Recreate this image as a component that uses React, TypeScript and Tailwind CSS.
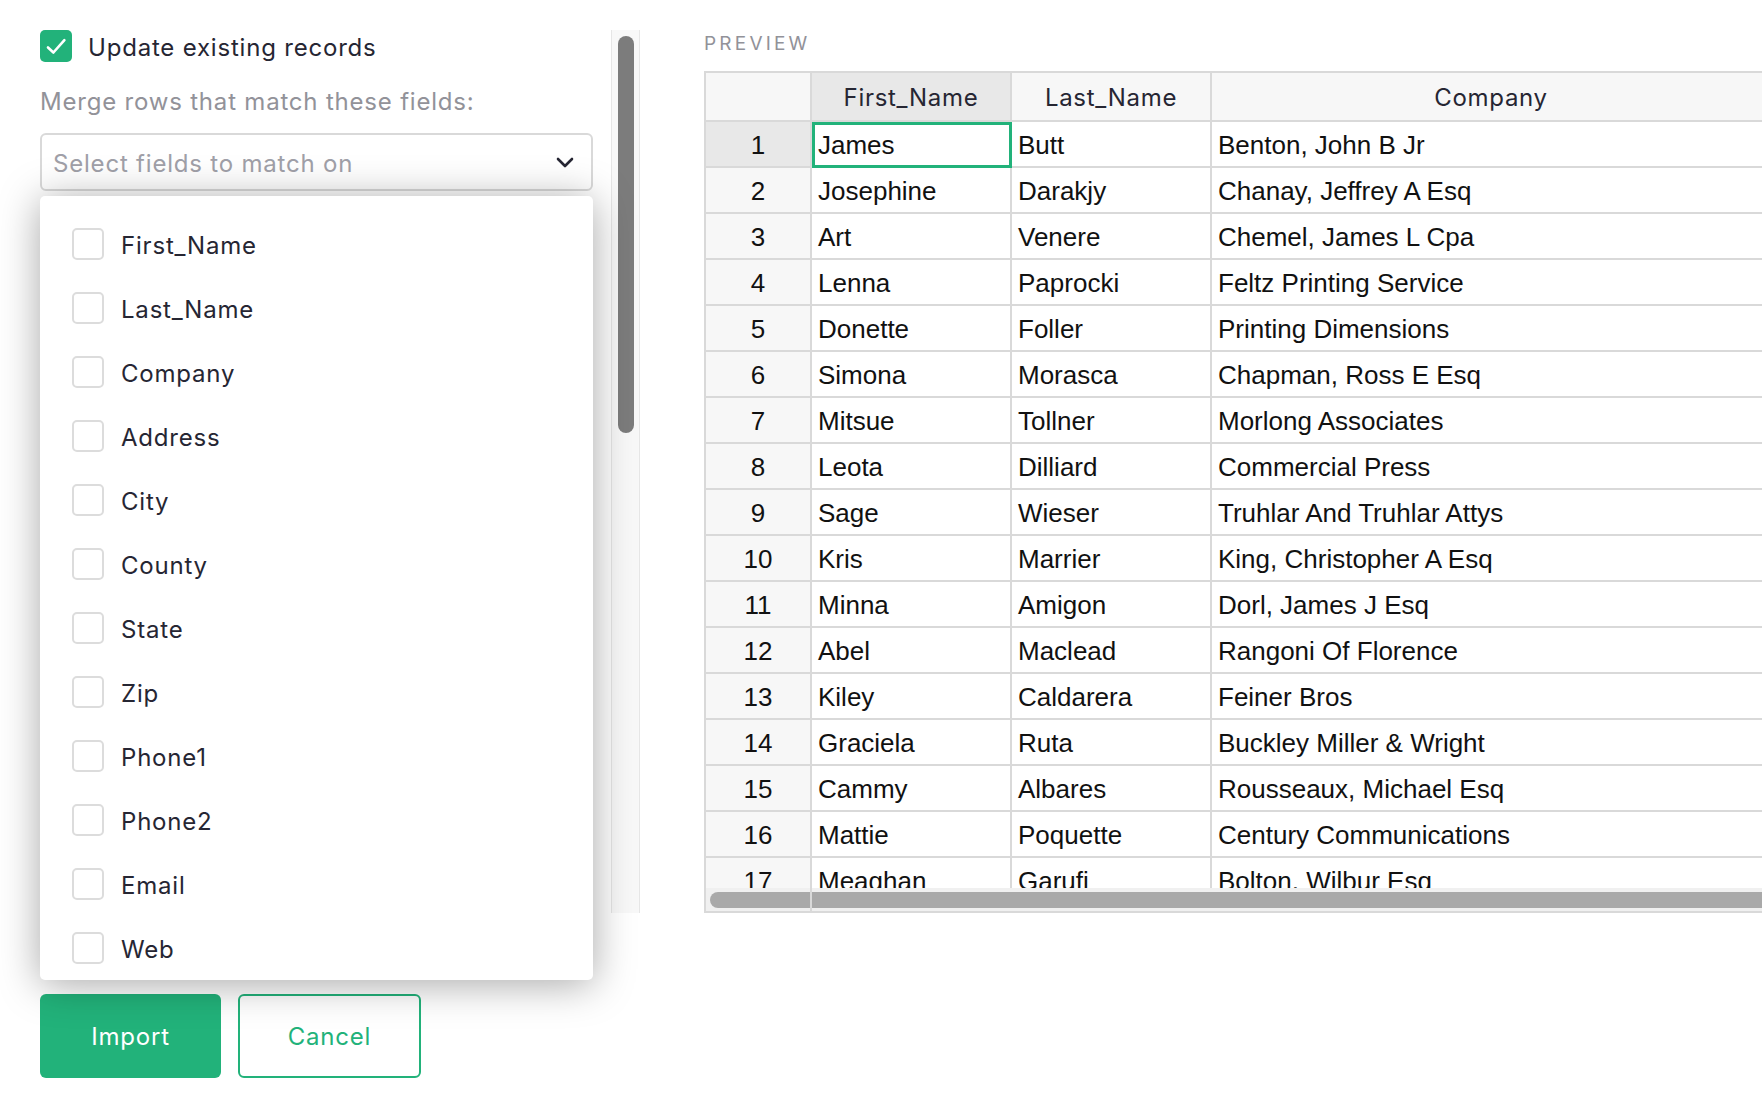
import React from "react";

const fields = [
	"First_Name",
	"Last_Name",
	"Company",
	"Address",
	"City",
	"County",
	"State",
	"Zip",
	"Phone1",
	"Phone2",
	"Email",
	"Web",
];

const rows: [string, string, string][] = [
	["James", "Butt", "Benton, John B Jr"],
	["Josephine", "Darakjy", "Chanay, Jeffrey A Esq"],
	["Art", "Venere", "Chemel, James L Cpa"],
	["Lenna", "Paprocki", "Feltz Printing Service"],
	["Donette", "Foller", "Printing Dimensions"],
	["Simona", "Morasca", "Chapman, Ross E Esq"],
	["Mitsue", "Tollner", "Morlong Associates"],
	["Leota", "Dilliard", "Commercial Press"],
	["Sage", "Wieser", "Truhlar And Truhlar Attys"],
	["Kris", "Marrier", "King, Christopher A Esq"],
	["Minna", "Amigon", "Dorl, James J Esq"],
	["Abel", "Maclead", "Rangoni Of Florence"],
	["Kiley", "Caldarera", "Feiner Bros"],
	["Graciela", "Ruta", "Buckley Miller & Wright"],
	["Cammy", "Albares", "Rousseaux, Michael Esq"],
	["Mattie", "Poquette", "Century Communications"],
	["Meaghan", "Garufi", "Bolton, Wilbur Esq"],
];

function CheckMark() {
	return (
		<svg width="32" height="32" viewBox="0 0 32 32" fill="none">
			<path
				d="M8 17.5 L13.4 22.5 L24.4 10.1"
				stroke="white"
				strokeWidth="2.6"
				strokeLinecap="round"
				strokeLinejoin="round"
			/>
		</svg>
	);
}

function Chevron() {
	return (
		<svg width="18" height="11" viewBox="0 0 18 11" fill="none">
			<path
				d="M2 2 L9 9 L16 2"
				stroke="#262633"
				strokeWidth="2.6"
				strokeLinecap="round"
				strokeLinejoin="round"
			/>
		</svg>
	);
}

function MergeFields() {
	return (
		<div className="relative w-[571px] pr-[18px]">
			<div className="flex items-center h-[32px] gap-[16px]">
				<div className="w-[32px] h-[32px] shrink-0 rounded-[5px] bg-[#22b27a] flex items-center justify-center">
					<CheckMark />
				</div>
				<span className="text-[24px] leading-[32px] tracking-[0.8px] text-[#262633] pt-[4px]">
					Update existing records
				</span>
			</div>
			<div className="mt-[24px] text-[24px] leading-[32px] tracking-[0.8px] text-[#929299]">
				Merge rows that match these fields:
			</div>
			<div className="mt-[15px] h-[58px] border-2 border-[#d9d9d9] rounded-[6px] flex items-center justify-between pl-[11px] pr-[17px]">
				<span className="text-[24px] leading-[32px] tracking-[0.8px] text-[#a0a0a8] pt-[4px]">
					Select fields to match on
				</span>
				<Chevron />
			</div>
			<div className="absolute left-0 top-[166px] w-[553px] h-[784px] bg-white rounded-[5px] shadow-[0_4px_40px_rgba(0,0,0,0.35)] pt-[16px] overflow-hidden">
				{fields.map((f) => (
					<div key={f} className="flex items-center h-[64px] pl-[32px] gap-[17px]">
						<div className="w-[32px] h-[32px] rounded-[5px] border-2 border-[#dcdcdc] bg-white" />
						<span className="text-[24px] leading-[32px] tracking-[0.8px] text-[#262633] pt-[4px]">
							{f}
						</span>
					</div>
				))}
			</div>
		</div>
	);
}

function Preview() {
	const cell = "border-r-2 border-[#d9d9d9] shrink-0";
	const data = "font-['Liberation_Sans',Arial,sans-serif] text-[26px] leading-[46px] text-[#111] truncate";
	const head = "flex items-center justify-center pt-[2px]";
	return (
		<div className="flex-1 min-w-0">
			<div className="mt-[4px] h-[20px] text-[19px] leading-[20px] tracking-[3.2px] text-[#929299]">
				PREVIEW
			</div>
			<div className="mt-[17px] w-[1200px] h-[842px] border-2 border-[#d9d9d9] flex flex-col">
				<div className="flex h-[49px] shrink-0 border-b-2 border-[#d9d9d9] bg-[#f7f7f7] text-[24px] tracking-[0.7px] text-[#262633]">
					<div className={`${cell} w-[106px]`} />
					<div className={`${cell} ${head} w-[200px] bg-[#e8e8e8]`}>First_Name</div>
					<div className={`${cell} ${head} w-[200px]`}>Last_Name</div>
					<div className={`${cell} ${head} w-[560px]`}>Company</div>
					<div className={`${cell} ${head} w-[200px]`}>Address</div>
				</div>
				<div className="h-[766px] shrink-0 overflow-hidden">
					{rows.map((r, i) => (
						<div key={i} className="flex h-[46px] border-b-2 border-[#d9d9d9]">
							<div
								className={`${cell} w-[106px] text-center ${i === 0 ? "bg-[#e8e8e8]" : "bg-[#f7f7f7]"} ${data}`}
							>
								{i + 1}
							</div>
							<div className={`${cell} w-[200px] relative pl-[6px] ${data}`}>
								{r[0]}
							</div>
							<div className={`${cell} w-[200px] pl-[6px] ${data}`}>{r[1]}</div>
							<div className={`${cell} w-[560px] pl-[6px] ${data}`}>{r[2]}</div>
							<div className={`${cell} w-[200px]`} />
						</div>
					))}
				</div>
				<div className="relative h-[23px] shrink-0 bg-[#f0f0f0] pt-[4px] pl-[4px]">
					<div className="h-[16px] w-[1300px] rounded-full bg-[#a9a9a9]" />
					<div className="absolute left-[104px] top-0 bottom-0 w-[2px] bg-[#d9d9d9]" />
				</div>
			</div>
		</div>
	);
}

export default function App() {
	return (
		<div className="w-[1762px] h-[1114px] overflow-hidden bg-white flex pt-[30px] pl-[40px] font-['Inter',sans-serif]">
			<div className="w-[600px] shrink-0 flex flex-col">
				<div className="flex h-[883px]">
					<MergeFields />
					<div className="w-[29px] h-full bg-[#f8f8f8] border-l border-r border-[#e6e6e6] pt-[6px] pl-[6px]">
						<div className="w-[16px] h-[397px] rounded-full bg-[#7c7c7c]" />
					</div>
				</div>
				<div className="mt-[81px] flex gap-[17px]">
					<button className="w-[181px] h-[84px] rounded-[6px] bg-[#22b27a] text-white text-[24px] tracking-[0.8px] pt-[2px]">
						Import
					</button>
					<button className="w-[183px] h-[84px] rounded-[6px] border-2 border-[#22b27a] bg-white text-[#22b27a] text-[24px] tracking-[0.8px] pt-[2px]">
						Cancel
					</button>
				</div>
			</div>
			<div className="ml-[64px] flex-1 min-w-0 overflow-hidden relative">
				<Preview />
				<div className="absolute left-[108px] top-[92px] w-[200px] h-[46px] border-[3px] border-[#22b27a]" />
			</div>
		</div>
	);
}
